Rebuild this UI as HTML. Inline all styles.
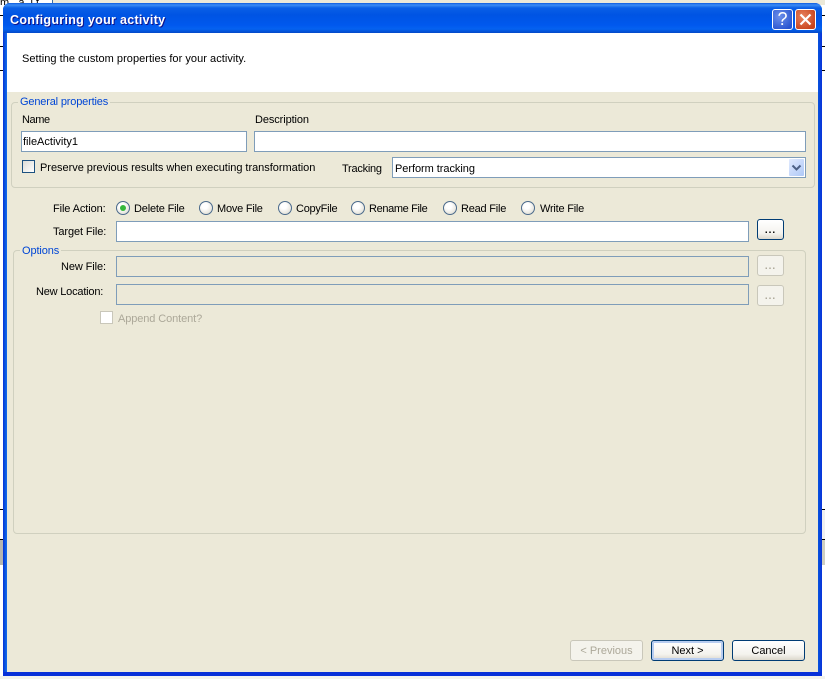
<!DOCTYPE html>
<html><head><meta charset="utf-8">
<style>
html,body{margin:0;padding:0;width:825px;height:679px;overflow:hidden;background:#fff}
body{position:relative;font-family:"Liberation Sans","DejaVu Sans",sans-serif;font-size:11px;color:#000}
div,span{position:absolute;box-sizing:border-box}
.t{white-space:nowrap;line-height:13px;height:13px;margin-top:1px;letter-spacing:-.1px}
.leg{color:#0046d5;background:#ece9d8;padding:0 2px}
.inp{background:#fff;border:1px solid #7f9db9}
.dis{background:#ece9d8;border:1px solid #7f9db9}
.grp{border:1px solid #d0d0bf;border-radius:4px}
.rad{width:14px;height:14px;border-radius:50%;border:1.5px solid #4a6a8c;background:radial-gradient(circle at 40% 35%,#fff 25%,#d8d5c8 100%)}
.btn{border:1px solid #003c74;border-radius:3px;background:linear-gradient(#fff,#f4f3ee 70%,#dcd8cc);text-align:center;line-height:20px}
.off{border:1px solid #c9c7ba;border-radius:3px;background:#f4f3ec;text-align:center;line-height:20px;color:#aca899}
.dots{letter-spacing:1px;line-height:22px;font-weight:bold;font-size:10px}
</style></head><body>
<!-- background behind -->
<div style="left:52px;top:0;width:773px;height:5px;background:#ece9d8;border-left:1px solid #3a6ea5"></div>
<div style="left:0;top:0;height:5px;width:50px;overflow:hidden;white-space:nowrap;line-height:6px">m&nbsp;&nbsp;&nbsp;a&nbsp;&nbsp;i&nbsp;t</div>
<div style="left:0;top:15px;width:4px;height:1px;background:#000"></div>
<div style="left:0;top:46px;width:4px;height:1px;background:#000"></div>
<div style="left:0;top:70px;width:4px;height:1px;background:#000"></div>
<div style="left:0;top:509px;width:4px;height:1px;background:#000"></div>
<div style="left:0;top:539px;width:4px;height:1px;background:#000"></div>
<div style="left:0;top:540px;width:4px;height:25px;background:#b5b5b0"></div>
<div style="left:821px;top:15px;width:4px;height:1px;background:#000"></div>
<div style="left:821px;top:46px;width:4px;height:1px;background:#000"></div>
<div style="left:821px;top:70px;width:4px;height:1px;background:#000"></div>
<div style="left:821px;top:509px;width:4px;height:1px;background:#000"></div>
<div style="left:821px;top:510px;width:4px;height:29px;background:#f0f0f0"></div>
<div style="left:821px;top:539px;width:4px;height:1px;background:#000"></div>
<div style="left:821px;top:540px;width:4px;height:25px;background:#cfcfc2"></div>
<div style="left:0;top:676px;width:825px;height:3px;background:#f3f3ee"></div>
<!-- window frame -->
<div style="left:3px;top:3px;width:819px;height:673px;background:linear-gradient(90deg,#0831d9 0,#0855dd 2px,#166aee 4px);border-radius:7px 7px 0 0"></div>
<div style="left:818px;top:20px;width:4px;height:656px;background:linear-gradient(90deg,#0855dd,#0831d9)"></div>
<div style="left:3px;top:672px;width:819px;height:4px;background:#0831d9"></div>
<!-- title bar -->
<div style="left:3px;top:3px;width:819px;height:30px;border-radius:7px 7px 0 0;background:linear-gradient(#0a5ae0 0,#3c8cf5 2px,#0a5fe6 5px,#0054e3 12px,#0058ee 22px,#0462f0 26px,#0448c8 30px)"></div>
<div style="left:10px;top:13px;white-space:nowrap;color:#fff;font-weight:bold;font-size:12.5px;letter-spacing:.3px;text-shadow:1px 1px #0f1089;height:15px;line-height:15px">Configuring your activity</div>
<!-- help / close -->
<div style="left:772px;top:9px;width:21px;height:21px;border:1px solid #fff;border-radius:3px;background:radial-gradient(circle at 35% 35%,#6d90ea,#2a55d0 80%);color:#fff;font-size:18px;line-height:19px;text-align:center">?</div>
<div style="left:795px;top:9px;width:21px;height:21px;border:1px solid #fff;border-radius:3px;background:radial-gradient(circle at 35% 35%,#e8825f,#c8431c 80%)">
<svg width="19" height="19" style="position:absolute;left:0;top:0"><path d="M4.5 4.5L14.5 14.5M14.5 4.5L4.5 14.5" stroke="#fff" stroke-width="2.2" fill="none"/></svg></div>
<!-- client -->
<div style="left:7px;top:33px;width:811px;height:639px;background:#ece9d8"></div>
<div style="left:7px;top:33px;width:811px;height:59px;background:#fff"></div>
<div class="t" style="left:22px;top:52px;letter-spacing:.04px">Setting the custom properties for your activity.</div>
<!-- General -->
<div class="grp" style="left:11px;top:102px;width:804px;height:86px"></div>
<div class="t leg" style="left:18px;top:95px;letter-spacing:-.17px">General properties</div>
<div class="t" style="left:22px;top:113px;letter-spacing:-.4px">Name</div>
<div class="t" style="left:255px;top:113px">Description</div>
<div class="inp" style="left:21px;top:131px;width:226px;height:21px"></div>
<div class="t" style="left:23px;top:135px;letter-spacing:0">fileActivity1</div>
<div class="inp" style="left:254px;top:131px;width:552px;height:21px"></div>
<div style="left:22px;top:160px;width:13px;height:13px;border:1px solid #1c5180;background:linear-gradient(135deg,#dcdcd7,#fff)"></div>
<div class="t" style="left:40px;top:161px;letter-spacing:-.03px">Preserve previous results when executing transformation</div>
<div class="t" style="left:342px;top:162px;letter-spacing:-.25px">Tracking</div>
<div class="inp" style="left:392px;top:157px;width:414px;height:21px"></div>
<div class="t" style="left:395px;top:162px;letter-spacing:-.05px">Perform tracking</div>
<div style="left:789px;top:159px;width:15px;height:17px;background:linear-gradient(135deg,#e1eafe,#aec8f7);border-radius:1px">
<svg width="15" height="17" style="position:absolute;left:0;top:0"><path d="M3.5 6.5L7.5 10.5L11.5 6.5" stroke="#4d6185" stroke-width="2" fill="none"/></svg></div>
<!-- File action -->
<div class="t" style="left:53px;top:202px">File Action:</div>
<div class="rad" style="left:116px;top:201px"></div>
<div style="left:120px;top:205px;width:6px;height:6px;border-radius:50%;background:#36b83c"></div>
<div class="t" style="left:134px;top:202px;letter-spacing:-.18px">Delete File</div>
<div class="rad" style="left:199px;top:201px"></div>
<div class="t" style="left:217px;top:202px;letter-spacing:-.22px">Move File</div>
<div class="rad" style="left:278px;top:201px"></div>
<div class="t" style="left:296px;top:202px;letter-spacing:-.25px">CopyFile</div>
<div class="rad" style="left:351px;top:201px"></div>
<div class="t" style="left:369px;top:202px;letter-spacing:-.36px">Rename File</div>
<div class="rad" style="left:443px;top:201px"></div>
<div class="t" style="left:461px;top:202px;letter-spacing:-.22px">Read File</div>
<div class="rad" style="left:521px;top:201px"></div>
<div class="t" style="left:540px;top:202px;letter-spacing:-.22px">Write File</div>
<div class="t" style="left:53px;top:225px">Target File:</div>
<div class="inp" style="left:116px;top:221px;width:633px;height:21px"></div>
<div class="btn dots" style="left:757px;top:219px;width:27px;height:21px">...</div>
<!-- Options -->
<div class="grp" style="left:13px;top:250px;width:793px;height:284px"></div>
<div class="t leg" style="left:20px;top:244px">Options</div>
<div class="t" style="left:61px;top:260px">New File:</div>
<div class="dis" style="left:116px;top:256px;width:633px;height:21px"></div>
<div class="off dots" style="left:757px;top:255px;width:27px;height:21px">...</div>
<div class="t" style="left:36px;top:285px;letter-spacing:-.2px">New Location:</div>
<div class="dis" style="left:116px;top:284px;width:633px;height:21px"></div>
<div class="off dots" style="left:757px;top:285px;width:27px;height:21px">...</div>
<div style="left:100px;top:311px;width:13px;height:13px;border:1px solid #c9c7ba;background:#fff"></div>
<div class="t" style="left:118px;top:312px;color:#aca899">Append Content?</div>
<!-- Bottom buttons -->
<div class="off" style="left:570px;top:640px;width:73px;height:21px">&lt; Previous</div>
<div class="btn" style="left:651px;top:640px;width:73px;height:21px;box-shadow:inset 0 0 0 2px #b8cdf0">Next &gt;</div>
<div class="btn" style="left:732px;top:640px;width:73px;height:21px">Cancel</div>
</body></html>
